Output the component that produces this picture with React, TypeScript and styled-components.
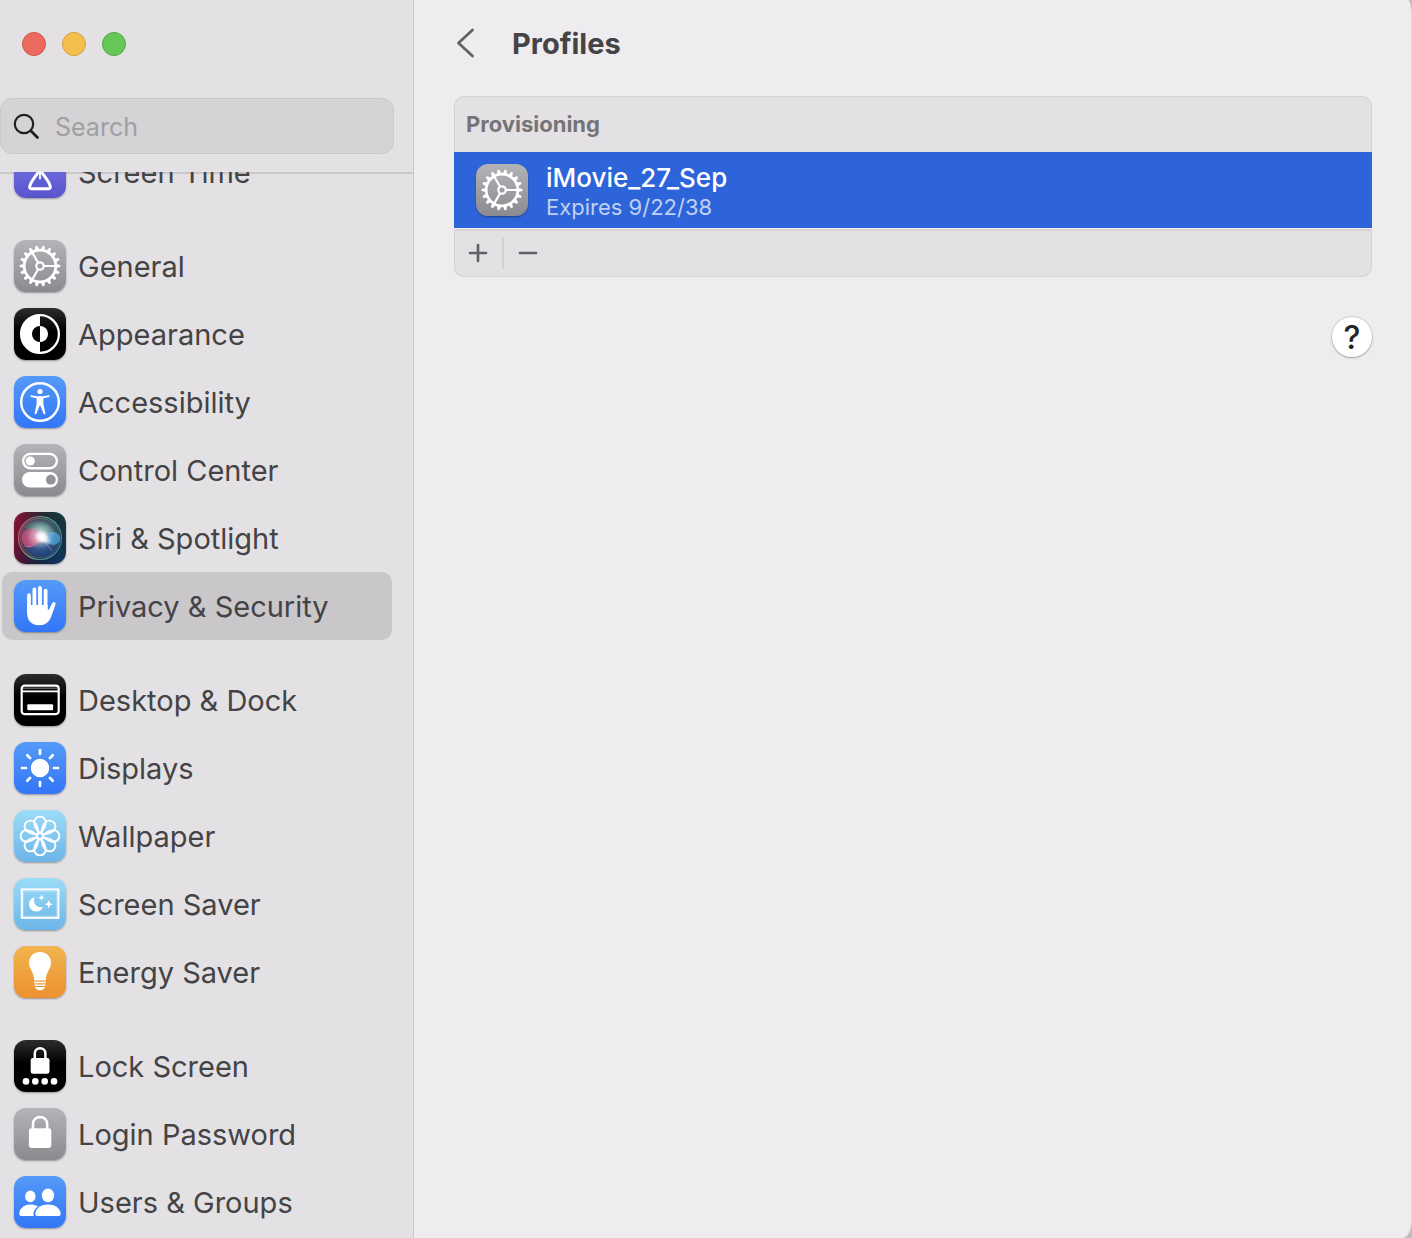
import React, { useLayoutEffect, useRef, useState } from "react";
import styled, { createGlobalStyle } from "styled-components";

const GlobalStyle = createGlobalStyle`
  *, *::before, *::after { box-sizing: border-box; }
  body {
    margin: 0;
    background: #bdbcbe;
    font-family: Inter, "Liberation Sans", sans-serif;
    color: #444345;
  }
  button, input { font: inherit; color: inherit; }
`;

/* ---------- Window ---------- */

const Window = styled.div`
  display: flex;
  height: 100vh;
  overflow: hidden;
  background: #eeecef;
  border-right: 1px solid #dcdbdd;
  border-radius: 0 4px 10px 0 / 0 16px 16px 0;
`;

const Sidebar = styled.aside`
  display: flex;
  flex-direction: column;
  flex: 0 0 414px;
  min-width: 0;
  min-height: 0;
  background: #e3e1e4;
  border-right: 1px solid #c9c7ca;
`;

const SidebarHeader = styled.header`
  flex: none;
  padding: 32px 19px 18px 0;
`;

const WindowControls = styled.div`
  display: flex;
  gap: 16px;
  padding: 0 22px;
  margin-bottom: 42px;
`;

const ControlDot = styled.button<{ $fill: string; $edge: string }>`
  width: 24px;
  height: 24px;
  padding: 0;
  border: 1px solid ${(p) => p.$edge};
  border-radius: 50%;
  background: ${(p) => p.$fill};
`;

const SearchField = styled.label`
  display: flex;
  align-items: center;
  gap: 14px;
  height: 56px;
  padding: 0 12px;
  border: 1px solid #cac8cb;
  border-radius: 12px;
  background: #d5d3d6;
  svg { flex: none; }
`;

const SearchInput = styled.input`
  flex: 1;
  width: 100%;
  min-width: 0;
  padding: 2px 0 0;
  border: 0;
  outline: 0;
  background: transparent;
  font-size: 25px;
  line-height: 32px;
  &::placeholder { color: #a09fa1; opacity: 1; }
`;

const Nav = styled.nav`
  flex: 1;
  min-height: 0;
  overflow-y: auto;
  scrollbar-width: none;
  padding: 0 21px 12px 2px;
  box-shadow: inset 0 2px 0 #c9c7ca;
`;

const NavGroup = styled.ul`
  list-style: none;
  margin: 0 0 26px;
  padding: 0;
`;

const NavItem = styled.button<{ $selected: boolean }>`
  display: flex;
  align-items: center;
  gap: 12px;
  width: 100%;
  height: 68px;
  padding: 0 12px;
  border: 0;
  border-radius: 10px;
  background: ${(p) => (p.$selected ? "#c9c7ca" : "transparent")};
  font-size: 29px;
  line-height: 36px;
  text-align: left;
  white-space: nowrap;
`;

const NavLabel = styled.span`
  padding-top: 2px;
`;

const Tile = styled.span<{ $bg: string }>`
  flex: none;
  width: 52px;
  height: 52px;
  border-radius: 12px;
  overflow: hidden;
  background: ${(p) => p.$bg};
  box-shadow: 0 1px 2px rgba(0, 0, 0, 0.35);
  svg { display: block; }
`;

/* ---------- Content ---------- */

const Content = styled.main`
  flex: 1;
  min-width: 0;
  padding: 20px 39px 40px 40px;
`;

const TitleBar = styled.header`
  display: flex;
  align-items: center;
  gap: 32px;
  height: 48px;
  margin-bottom: 28px;
`;

const BackButton = styled.button`
  display: flex;
  padding: 0;
  border: 0;
  background: none;
`;

const Title = styled.h1`
  margin: 0;
  font-size: 29px;
  line-height: 36px;
  font-weight: 700;
`;

const Panel = styled.section`
  border-radius: 10px;
  background: #e3e1e4;
  box-shadow: inset 0 0 0 1px #d5d3d6;
`;

const PanelTitle = styled.h2`
  margin: 0;
  padding: 14px 12px;
  font-size: 22px;
  line-height: 28px;
  font-weight: 700;
  color: #757477;
`;

const ProfileRow = styled.button`
  display: flex;
  align-items: center;
  gap: 18px;
  width: 100%;
  height: 76px;
  padding: 0 22px;
  border: 0;
  background: #2e64d9;
  color: #fff;
  text-align: left;
`;

const ProfileText = styled.span`
  display: flex;
  flex-direction: column;
  padding-top: 2px;
`;

const ProfileName = styled.span`
  font-size: 26px;
  line-height: 32px;
  font-weight: 500;
`;

const ProfileDetail = styled.span`
  font-size: 22px;
  line-height: 26px;
  color: #c0d0f4;
`;

const PanelFooter = styled.footer`
  display: flex;
  align-items: center;
  height: 49px;
  border-top: 1px solid #f0eef1;
  box-shadow: inset 0 2px 0 #d5d3d6;
`;

const FooterButton = styled.button`
  display: flex;
  align-items: center;
  justify-content: center;
  width: 48px;
  height: 32px;
  padding: 0;
  border: 0;
  background: none;
  & + & { width: 50px; border-left: 2px solid #d2d0d3; }
`;

const HelpRow = styled.div`
  display: flex;
  justify-content: flex-end;
  padding-top: 40px;
`;

const HelpButton = styled.button`
  width: 40px;
  height: 40px;
  padding: 2px 0 0;
  border: 0;
  border-radius: 50%;
  background: #fff;
  color: #252427;
  font-size: 32px;
  line-height: 36px;
  font-weight: 500;
  box-shadow: 0 0 1px 1px rgba(0, 0, 0, 0.1), 0 1px 2px rgba(0, 0, 0, 0.25);
`;

/* ---------- Icons, drawn on a 52 unit tile ---------- */

const Glyph = ({ children }: { children: React.ReactNode }) => (
  <svg width="52" height="52" viewBox="0 0 52 52" fill="none" aria-hidden="true">
    {children}
  </svg>
);

const gray = "linear-gradient(#b4b3b7, #8b8a8f)";
const black = "linear-gradient(#2c2c2c, #000 45%)";
const blue = "linear-gradient(#549af8, #3276f7)";
const sky = "linear-gradient(#9cdcf8, #6cb5e8)";
const orange = "linear-gradient(#f2b44f, #ec9130)";
const indigo = "linear-gradient(#7d7ae8, #5754cd)";

const spin = (count: number) => Array.from({ length: count }, (_, i) => (i * 360) / count);

const Gear = () => (
  <Glyph>
    <g stroke="#fff">
      <circle cx="26" cy="26" r="15.8" strokeWidth="2.7" />
      <circle cx="26" cy="26" r="3.7" strokeWidth="2.2" />
      {spin(3).map((a) => (
        <path key={a} d="M30 26H41" strokeWidth="2.2" transform={`rotate(${a} 26 26)`} />
      ))}
    </g>
    {spin(18).map((a) => (
      <path key={a} d="M42 23.9L46.4 25V27L42 28.1Z" fill="#fff" transform={`rotate(${a} 26 26)`} />
    ))}
  </Glyph>
);

const ScreenTime = () => (
  <Glyph>
    <path d="M16 8.500H36C36 17 31 21 27.500 26C31 31 36.500 37 36.300 41Q36.200 42.800 34.500 42.800H17.500Q15.800 42.800 15.700 41C15.500 37 21 31 24.500 26C21 21 16 17 16 8.500Z" stroke="#fff" strokeWidth="3" strokeLinejoin="round" />
    <path d="M26 25V34" stroke="#fff" strokeWidth="1.800" />
    <path d="M26 33C29.500 34.500 32 37.500 33 40.700H19C20 37.500 22.500 34.500 26 33Z" fill="#5e5bd4" />
  </Glyph>
);

const Appearance = () => (
  <Glyph>
    <circle cx="26" cy="26" r="18.900" stroke="#fff" strokeWidth="2.300" />
    <path d="M26 7A19 19 0 0 0 26 45V34A8 8 0 0 1 26 18Z" fill="#fff" />
    <path d="M26 18A8 8 0 0 1 26 34Z" fill="#fff" />
  </Glyph>
);

const Accessibility = () => (
  <Glyph>
    <circle cx="26" cy="26" r="18.800" stroke="#fff" strokeWidth="2.400" />
    <circle cx="26" cy="15.600" r="2.600" fill="#fff" />
    <path d="M16.700 19.200L23.500 20.300H28.500L35.300 19.200Q36.200 20.400 35.200 21L29.400 22.300V28L31.400 37.400Q30.700 38.600 29.700 38L26.400 29.800H25.600L22.300 38Q21.300 38.600 20.600 37.400L22.600 28V22.300L16.800 21Q15.800 20.400 16.700 19.200Z" fill="#fff" />
  </Glyph>
);

const ControlCenter = () => (
  <Glyph>
    <rect x="9.100" y="9.900" width="33.800" height="14.400" rx="7.200" stroke="#fff" strokeWidth="2.400" />
    <circle cx="16.200" cy="17.100" r="4.600" fill="#fff" />
    <rect x="8" y="28" width="36" height="15.400" rx="7.700" fill="#fff" />
    <circle cx="36.800" cy="35.700" r="4.900" fill="#939297" />
  </Glyph>
);

const Siri = () => (
  <Glyph>
    <defs>
      <radialGradient id="orb" cx="0.500" cy="0.450" r="0.550">
        <stop offset="0" stopColor="#e8f4ff" />
        <stop offset="0.400" stopColor="#8f9ab4" stopOpacity="0.750" />
        <stop offset="1" stopColor="#35506a" stopOpacity="0.250" />
      </radialGradient>
      <radialGradient id="flare">
        <stop offset="0" stopColor="#fff" />
        <stop offset="0.350" stopColor="#fff" stopOpacity="0.750" />
        <stop offset="1" stopColor="#fff" stopOpacity="0" />
      </radialGradient>
      <linearGradient id="rim" x1="0" y1="0.300" x2="1" y2="0.700">
        <stop offset="0" stopColor="#c9546c" />
        <stop offset="0.450" stopColor="#5fa287" />
        <stop offset="1" stopColor="#3a7f9c" />
      </linearGradient>
    </defs>
    <circle cx="26" cy="26" r="21.500" fill="url(#orb)" stroke="url(#rim)" strokeWidth="1.200" />
    <circle cx="26" cy="26" r="19.600" stroke="url(#rim)" strokeWidth="0.800" opacity="0.600" />
    <path d="M10 16C18 6 37 7 43 24C34 20 28 20 26 25C22 19 16 17 10 16Z" fill="#3f9c7c" opacity="0.400" />
    <ellipse cx="17.500" cy="26" rx="10.200" ry="9.400" fill="#dc5080" opacity="0.650" />
    <ellipse cx="38.500" cy="26.500" rx="7.800" ry="6.400" fill="#4fa6e2" opacity="0.750" />
    <path d="M12 38C22 31 27 29 31 30C37 32 41 34 40 38C32 47 19 46 12 38Z" fill="#1c4a94" opacity="0.550" />
    <path d="M10 34C18 36 25 32 28 26L38 39" stroke="#d98cb0" strokeWidth="0.900" opacity="0.600" />
    <circle cx="26.500" cy="23.500" r="14" fill="url(#flare)" opacity="0.550" />
    <circle cx="27.500" cy="25" r="7" fill="url(#flare)" />
    <ellipse cx="29" cy="26" rx="10" ry="5" fill="url(#flare)" opacity="0.800" transform="rotate(35 29 26)" />
  </Glyph>
);

const Hand = () => (
  <Glyph>
    <g stroke="#fff" strokeWidth="3.800" strokeLinecap="round">
      <path d="M15 15.200V32M20.400 9.500V28M26 8V28M31.600 10.600V30" />
    </g>
    <path d="M13.100 24V33C13.100 41 18 45.200 25.200 45.200C31.500 45.200 34.800 42.400 37 37L41.500 24.500C42.200 22.200 39.600 21 38.300 23L35.200 29.200C34.600 30.200 33.500 30 33.500 28.600V25H13.100Z" fill="#fff" />
  </Glyph>
);

const DesktopDock = () => (
  <Glyph>
    <rect x="7.700" y="11.700" width="37" height="28.400" rx="3" stroke="#fff" strokeWidth="2.200" />
    <path d="M9 14.200H43.500" stroke="#7c7c7c" strokeWidth="1" />
    <path d="M8 17.300H44" stroke="#fff" strokeWidth="1.800" />
    <rect x="13.300" y="30.300" width="25.800" height="6" rx="1" fill="#fff" />
  </Glyph>
);

const Displays = () => (
  <Glyph>
    <circle cx="26" cy="26" r="9.200" fill="#fff" />
    {spin(8).map((a) => (
      <path key={a} d="M40 26H44" stroke="#fff" strokeWidth="2.700" strokeLinecap="round" transform={`rotate(${a} 26 26)`} />
    ))}
  </Glyph>
);

const Wallpaper = () => (
  <Glyph>
    {spin(8).map((a) => (
      <path key={a} d="M26 23.200C22.800 20.500 20.300 15.800 20.300 12.300A5.700 5.700 0 0 1 31.700 12.300C31.700 15.800 29.200 20.500 26 23.200Z" stroke="#fff" strokeWidth="1.900" transform={`rotate(${a} 26 26)`} />
    ))}
  </Glyph>
);

const ScreenSaver = () => (
  <Glyph>
    <rect x="7.800" y="11.400" width="36.600" height="28.400" stroke="#fff" strokeWidth="2" />
    <rect x="9.600" y="13.200" width="33" height="24.800" stroke="#fff" strokeWidth="1" opacity="0.300" />
    <path d="M20.500 19.300C17.300 20.200 15 22.900 15 26.300C15 30.300 18.200 33.500 22.200 33.500C25.500 33.500 28 31.600 29 28.700C23.500 31 18.200 25.500 20.500 19.300Z" fill="#fff" />
    <path d="M27.500 16.300L28.400 18.700L30.800 19.600L28.400 20.500L27.500 22.900L26.600 20.500L24.200 19.600L26.600 18.700Z" fill="#fff" />
    <path d="M34.700 22L35.800 25.100L38.900 26.200L35.800 27.300L34.700 30.400L33.600 27.300L30.500 26.200L33.600 25.100Z" fill="#fff" />
  </Glyph>
);

const Bulb = () => (
  <Glyph>
    <path d="M26 6C19.700 6 15 10.600 15 16.700C15 23.200 19.800 25 20.300 34.500H31.700C32.200 25 37 23.200 37 16.700C37 10.600 32.300 6 26 6Z" fill="#fff" />
    <path d="M20.200 36.600H31.800M20.500 39.200H31.500" stroke="#fff" strokeWidth="1.500" />
    <path d="M21 41H31C30.500 43 29 44.200 26 44.200C23 44.200 21.500 43 21 41Z" fill="#fff" />
  </Glyph>
);

const LockScreen = () => (
  <Glyph>
    <rect x="16.700" y="18" width="18.800" height="15.800" rx="2.200" fill="#fff" />
    <path d="M20.800 19V13.500A5.300 5.300 0 0 1 31.400 13.500V19" stroke="#fff" strokeWidth="2.500" />
    {[12, 21.3, 30.7, 40].map((x) => (
      <circle key={x} cx={x} cy="41.400" r="3.300" fill="#fff" />
    ))}
  </Glyph>
);

const Padlock = () => (
  <Glyph>
    <rect x="14.900" y="20.300" width="22.400" height="19.700" rx="2.400" fill="#fff" />
    <path d="M19 21V16A7.100 7.100 0 0 1 33.200 16V21" stroke="#fff" strokeWidth="2.500" />
  </Glyph>
);

const Users = () => (
  <Glyph>
    <ellipse cx="16.300" cy="20.400" rx="5.200" ry="5.900" fill="#fff" />
    <path d="M24 30.500C21.500 28.800 19 28.400 16.300 28.400C9.500 28.400 5.300 33 5.300 38Q5.300 40 7.200 40H19.800C18.800 36.500 20.500 33 24 30.500Z" fill="#fff" />
    <ellipse cx="34" cy="19.400" rx="6.100" ry="6.800" fill="#fff" />
    <path d="M34 28.600C26 28.600 21.300 33.500 21.300 38Q21.300 40 23.200 40H44.800Q46.700 40 46.700 38C46.700 33.500 42 28.600 34 28.600Z" fill="#fff" />
  </Glyph>
);

/* ---------- Data ---------- */

type Entry = { label: string; bg: string; icon: React.ReactNode };

const siriBg =
  "radial-gradient(circle at 100% 0, #163f3e, transparent 65%), radial-gradient(circle at 100% 100%, #103c66, transparent 65%), linear-gradient(110deg, #8c1735, #151329 65%)";

const groups: Entry[][] = [
  [{ label: "Screen Time", bg: indigo, icon: <ScreenTime /> }],
  [
    { label: "General", bg: gray, icon: <Gear /> },
    { label: "Appearance", bg: black, icon: <Appearance /> },
    { label: "Accessibility", bg: blue, icon: <Accessibility /> },
    { label: "Control Center", bg: gray, icon: <ControlCenter /> },
    { label: "Siri & Spotlight", bg: siriBg, icon: <Siri /> },
    { label: "Privacy & Security", bg: blue, icon: <Hand /> },
  ],
  [
    { label: "Desktop & Dock", bg: black, icon: <DesktopDock /> },
    { label: "Displays", bg: blue, icon: <Displays /> },
    { label: "Wallpaper", bg: sky, icon: <Wallpaper /> },
    { label: "Screen Saver", bg: sky, icon: <ScreenSaver /> },
    { label: "Energy Saver", bg: orange, icon: <Bulb /> },
  ],
  [
    { label: "Lock Screen", bg: black, icon: <LockScreen /> },
    { label: "Login Password", bg: gray, icon: <Padlock /> },
    { label: "Users & Groups", bg: blue, icon: <Users /> },
  ],
];

export default function App() {
  const [selected, setSelected] = useState("Privacy & Security");
  const navRef = useRef<HTMLElement>(null);

  // The list opens scrolled half a row down.
  useLayoutEffect(() => {
    if (navRef.current) navRef.current.scrollTop = 34;
  }, []);

  return (
    <>
      <GlobalStyle />
      <Window>
        <Sidebar>
          <SidebarHeader>
            <WindowControls>
              <ControlDot aria-label="Close" $fill="#ec6a5e" $edge="#d35348" />
              <ControlDot aria-label="Minimize" $fill="#f4bf4f" $edge="#d6a03a" />
              <ControlDot aria-label="Zoom" $fill="#65c756" $edge="#51a73e" />
            </WindowControls>
            <SearchField>
              <svg width="28" height="28" viewBox="0 0 28 28" fill="none" stroke="#1f1e20" aria-hidden="true">
                <circle cx="11" cy="12" r="9.200" strokeWidth="2.200" />
                <path d="M18 19L24.500 25.500" strokeWidth="2.800" strokeLinecap="round" />
              </svg>
              <SearchInput type="search" placeholder="Search" aria-label="Search" />
            </SearchField>
          </SidebarHeader>
          <Nav ref={navRef} aria-label="Settings">
            {groups.map((group) => (
              <NavGroup key={group[0].label}>
                {group.map((item) => (
                  <li key={item.label}>
                    <NavItem $selected={item.label === selected} onClick={() => setSelected(item.label)}>
                      <Tile $bg={item.bg}>{item.icon}</Tile>
                      <NavLabel>{item.label}</NavLabel>
                    </NavItem>
                  </li>
                ))}
              </NavGroup>
            ))}
          </Nav>
        </Sidebar>
        <Content>
          <TitleBar>
            <BackButton aria-label="Back">
              <svg width="26" height="32" viewBox="0 0 26 32" fill="none" aria-hidden="true">
                <path d="M18.500 2L4.500 15L18.500 28" stroke="#626164" strokeWidth="2.800" strokeLinecap="round" strokeLinejoin="round" />
              </svg>
            </BackButton>
            <Title>Profiles</Title>
          </TitleBar>
          <Panel>
            <PanelTitle>Provisioning</PanelTitle>
            <ProfileRow>
              <Tile $bg={gray}><Gear /></Tile>
              <ProfileText>
                <ProfileName>iMovie_27_Sep</ProfileName>
                <ProfileDetail>Expires 9/22/38</ProfileDetail>
              </ProfileText>
            </ProfileRow>
            <PanelFooter>
              <FooterButton aria-label="Add profile">
                <svg width="20" height="20" viewBox="0 0 20 20" stroke="#626164" strokeWidth="2.700" strokeLinecap="round" aria-hidden="true">
                  <path d="M2 10H18M10 2V18" />
                </svg>
              </FooterButton>
              <FooterButton aria-label="Remove profile">
                <svg width="20" height="20" viewBox="0 0 20 20" stroke="#626164" strokeWidth="2.700" strokeLinecap="round" aria-hidden="true">
                  <path d="M2 10H18" />
                </svg>
              </FooterButton>
            </PanelFooter>
          </Panel>
          <HelpRow>
            <HelpButton aria-label="Help">?</HelpButton>
          </HelpRow>
        </Content>
      </Window>
    </>
  );
}
